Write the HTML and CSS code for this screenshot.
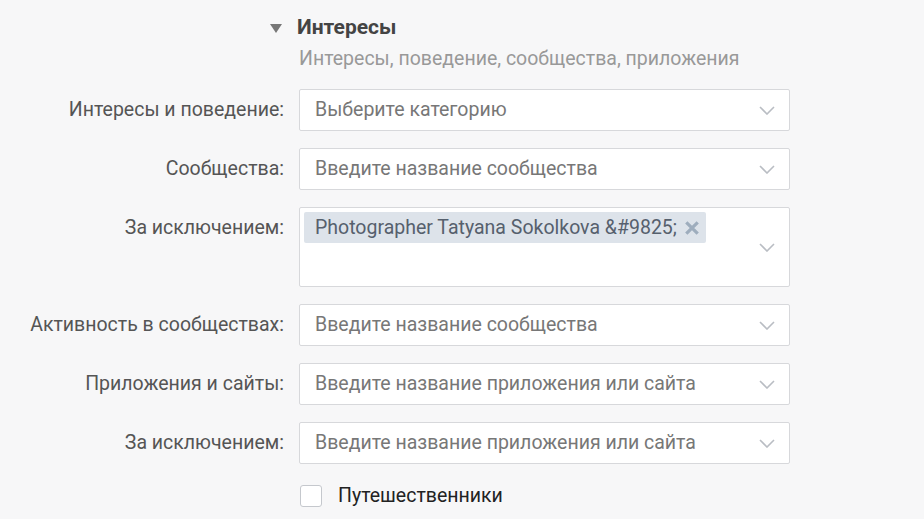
FILE: index.html
```html
<!DOCTYPE html>
<html lang="ru">
  <head>
    <meta charset="utf-8" />
    <title>Интересы</title>
    <link rel="stylesheet" href="styles.css">
  </head>
  <body>
    <div class="section">
      <div class="section-head">
        <span class="toggle"></span>
        <h2>Интересы</h2>
      </div>
      <p class="section-sub">Интересы, поведение, сообщества, приложения</p>

      <div class="form">
        <label class="form-label">Интересы и поведение:</label>
        <div class="select">
          <span class="placeholder">Выберите категорию</span>
          <svg class="chevron" viewBox="0 0 16 9"><polyline points="1,1 8,8 15,1" /></svg>
        </div>

        <label class="form-label">Сообщества:</label>
        <div class="select">
          <span class="placeholder">Введите название сообщества</span>
          <svg class="chevron" viewBox="0 0 16 9"><polyline points="1,1 8,8 15,1" /></svg>
        </div>

        <label class="form-label">За исключением:</label>
        <div class="select select-multi">
          <div class="tags">
            <span class="tag">
              Photographer Tatyana Sokolkova &amp;#9825;
              <svg class="tag-remove" viewBox="0 0 14 14"><path d="M2 2 L12 12 M12 2 L2 12" /></svg>
            </span>
          </div>
          <svg class="chevron" viewBox="0 0 16 9"><polyline points="1,1 8,8 15,1" /></svg>
        </div>

        <label class="form-label">Активность в сообществах:</label>
        <div class="select">
          <span class="placeholder">Введите название сообщества</span>
          <svg class="chevron" viewBox="0 0 16 9"><polyline points="1,1 8,8 15,1" /></svg>
        </div>

        <label class="form-label">Приложения и сайты:</label>
        <div class="select">
          <span class="placeholder">Введите название приложения или сайта</span>
          <svg class="chevron" viewBox="0 0 16 9"><polyline points="1,1 8,8 15,1" /></svg>
        </div>

        <label class="form-label">За исключением:</label>
        <div class="select">
          <span class="placeholder">Введите название приложения или сайта</span>
          <svg class="chevron" viewBox="0 0 16 9"><polyline points="1,1 8,8 15,1" /></svg>
        </div>

        <span></span>
        <label class="checkbox">
          <span class="checkbox-box"></span>
          Путешественники
        </label>
      </div>
    </div>
  </body>
</html>
```

FILE: styles.css
```css
html {
  font-family: Roboto, "Noto Sans", Arial, sans-serif;
  font-size: 19.5px;
  line-height: 1.3;
}

body {
  margin: 0;
  background-color: #f7f7f8;
  color: #555;
}

.section {
  padding-top: 14px;
}

.section-head {
  display: flex;
  align-items: center;
  height: 28px;
  margin-left: 270px;
}

.toggle {
  width: 0;
  height: 0;
  border-left: 6px solid transparent;
  border-right: 6px solid transparent;
  border-top: 9px solid #777;
  margin-right: 15px;
}

.section-head h2 {
  margin: 0;
  font-size: 21px;
  font-weight: 700;
  color: #444;
}

.section-sub {
  margin: 4px 0 0 299px;
  line-height: 25px;
  color: #999;
}

.form {
  display: grid;
  grid-template-columns: 284px 491px;
  column-gap: 15px;
  row-gap: 17px;
  margin-top: 18px;
}

.form-label {
  text-align: right;
  padding-top: 8px;
  line-height: 26px;
}

.select {
  position: relative;
  box-sizing: border-box;
  height: 42px;
  padding: 7px 40px 7px 15px;
  background-color: white;
  border: 1px solid #d7d8db;
  border-radius: 2px;
  line-height: 26px;
}

.select-multi {
  height: 80px;
  padding: 4px 40px 4px 4px;
}

.placeholder {
  color: #777;
}

.chevron {
  position: absolute;
  right: 14px;
  top: 50%;
  width: 16px;
  height: 9px;
  margin-top: -4px;
  fill: none;
  stroke: #b9bdc3;
  stroke-width: 1.6;
}

.tags {
  display: flex;
  flex-wrap: wrap;
}

.tag {
  display: inline-flex;
  align-items: center;
  height: 31px;
  padding: 0 6px 0 11px;
  background-color: #dde3ea;
  border-radius: 2px;
  color: #56606d;
}

.tag-remove {
  flex: none;
  width: 16px;
  height: 16px;
  margin-left: 7px;
  fill: none;
  stroke: #9eadbd;
  stroke-width: 2.8;
}

.checkbox {
  display: flex;
  align-items: center;
  margin-top: 2px;
  color: #222;
}

.checkbox-box {
  box-sizing: border-box;
  width: 22px;
  height: 22px;
  margin: 0 16px 0 1px;
  background-color: white;
  border: 1px solid #c5c8cd;
  border-radius: 3px;
}
```
